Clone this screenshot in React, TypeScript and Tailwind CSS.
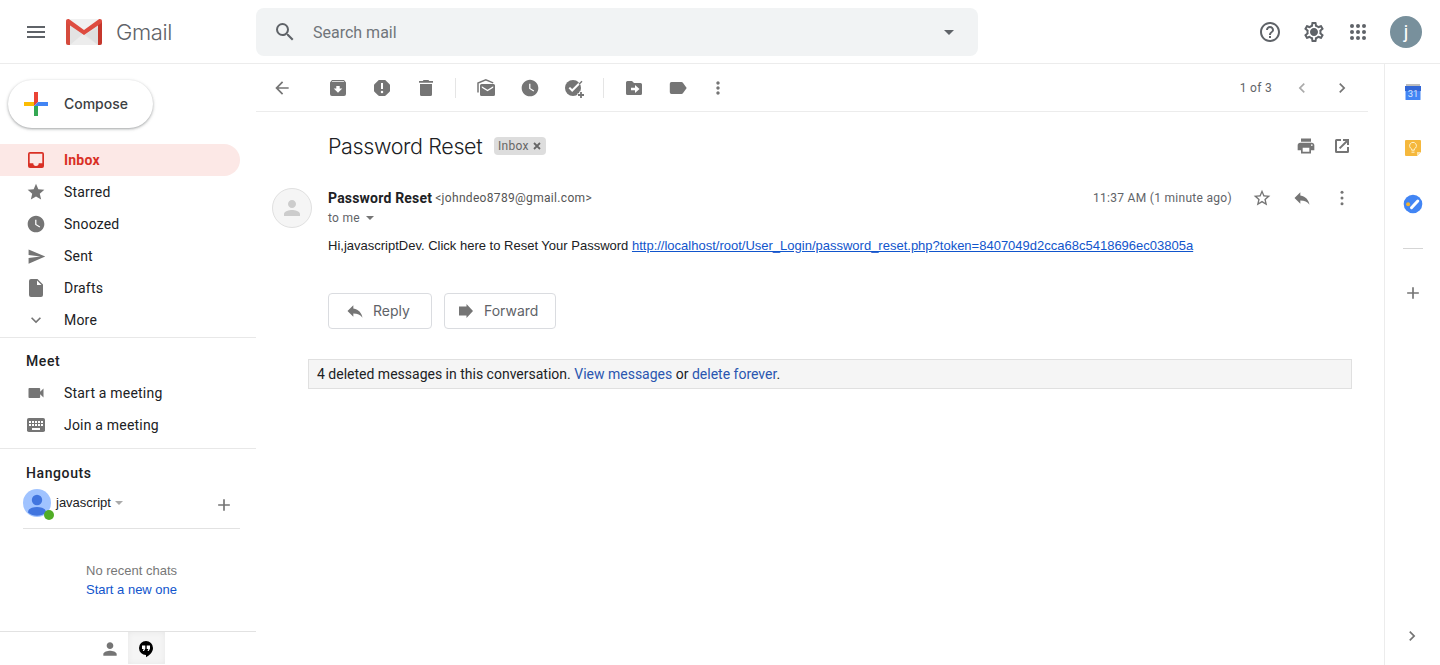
import type { ReactNode } from 'react';
import {
  MdAdd, MdArrowBack, MdArrowDropDown, MdChevronLeft, MdChevronRight, MdExpandMore, MdHelpOutline,
  MdMenu, MdMoreVert, MdOutlineSettings, MdPerson,
  MdPrint, MdReply, MdSearch, MdSend, MdStar, MdStarOutline, MdVideocam, MdWatchLater,
} from 'react-icons/md';

const Svg = ({ children, size = 20, box = 20 }: { children: ReactNode; size?: number; box?: number }) => (
  <svg width={size} height={size} viewBox={`0 0 ${box} ${box}`} fill="currentColor" className="shrink-0">{children}</svg>
);

const Archive = () => (
  <Svg><path fillRule="evenodd" d="M4 2h12l2 2.500V16a2 2 0 0 1-2 2H4a2 2 0 0 1-2-2V4.500zM4.300 3.300L3.700 4h12.600l-.6-.7zM8.300 8v2.500H5.700L10 14.800l4.300-4.300h-2.600V8z" /></Svg>
);
const Spam = () => (
  <Svg><path fillRule="evenodd" d="M7.300 2h5.400c.4 0 .8.200 1 .4l3.900 3.900c.2.200.4.600.4 1v5.400c0 .4-.2.800-.4 1l-3.900 3.900c-.2.200-.6.400-1 .4H7.300c-.4 0-.8-.2-1-.4l-3.900-3.900c-.2-.2-.4-.6-.4-1V7.300c0-.4.200-.8.400-1l3.900-3.900c.2-.2.600-.4 1-.4zM9 5v6h2V5zM10 12.700a1.250 1.250 0 1 0 0 2.500 1.250 1.250 0 0 0 0-2.500z" /></Svg>
);
const Trash = () => (
  <Svg><path d="M7.500 2h5l.7 1H17v1.800H3V3h3.800zM4 6h12v10.500a1.500 1.500 0 0 1-1.500 1.500h-9A1.500 1.500 0 0 1 4 16.500z" /></Svg>
);
const Unread = () => (
  <Svg>
    <path d="M2 14.500V5L9.800 1.900l7.400 3" fill="none" stroke="currentColor" strokeWidth="1.500" />
    <path fillRule="evenodd" d="M5.500 6h12A1.500 1.500 0 0 1 19 7.500v9a1.500 1.500 0 0 1-1.500 1.500h-12A1.500 1.500 0 0 1 4 16.500v-9A1.500 1.500 0 0 1 5.500 6zm.3 2.300v1.500l5.700 3.400 5.700-3.400V8.300l-5.700 3.400z" />
  </Svg>
);
const AddTask = () => (
  <Svg>
    <circle cx="9" cy="10" r="8" />
    <path d="M5.300 9.600l2.900 2.900 9.500-9.500" fill="none" stroke="#fff" strokeWidth="2" />
    <path d="M15 6.300l3-3" fill="none" stroke="currentColor" strokeWidth="1.500" />
    <path d="M13.500 17h7M17 13.500V20" fill="none" stroke="#fff" strokeWidth="3.400" />
    <path d="M14 17h6M17 14v6" fill="none" stroke="currentColor" strokeWidth="1.800" />
  </Svg>
);
const MoveTo = () => (
  <Svg><path fillRule="evenodd" d="M3.500 3H8l2 2h6.500A1.500 1.500 0 0 1 18 6.500v9a1.500 1.500 0 0 1-1.500 1.500h-13A1.500 1.500 0 0 1 2 15.500v-11A1.500 1.500 0 0 1 3.500 3zM11 7v2.700H7v2.600h4V15l4.500-4z" /></Svg>
);
const Label = () => (
  <Svg><path d="M3.500 4h10c.6 0 1.100.2 1.400.7L18.700 10l-3.800 5.300c-.3.5-.8.700-1.400.7h-10A1.700 1.700 0 0 1 1.800 14.300V5.700A1.700 1.700 0 0 1 3.500 4z" /></Svg>
);
const InboxTray = () => (
  <Svg><path fillRule="evenodd" d="M4 2h12a2 2 0 0 1 2 2v12a2 2 0 0 1-2 2H4a2 2 0 0 1-2-2V4a2 2 0 0 1 2-2zm-.3 1.700v9.500h3.600a2.700 2.700 0 0 0 5.400 0h3.600V3.700z" /></Svg>
);
const Draft = () => (
  <Svg><path fillRule="evenodd" d="M5 1h6.500L17 6.500V17a2 2 0 0 1-2 2H5a2 2 0 0 1-2-2V3a2 2 0 0 1 2-2zm6 1.500V7h4.500z" /></Svg>
);
const PopOut = () => (
  <Svg><path fillRule="evenodd" d="M4.500 3H9v2H5v10h10v-4h2v4.500a1.500 1.500 0 0 1-1.500 1.500h-11A1.500 1.500 0 0 1 3 15.500v-11A1.500 1.500 0 0 1 4.500 3zM11 3h6v6h-2V6.400l-6.700 6.700-1.400-1.400L13.600 5H11z" /></Svg>
);
const Dots = () => (
  <Svg><circle cx="10" cy="4.300" r="1.500" /><circle cx="10" cy="10" r="1.500" /><circle cx="10" cy="15.700" r="1.500" /></Svg>
);
const Keyboard = () => (
  <Svg>
    <rect x="1" y="3" width="18" height="14" rx="1.800" />
    <path d="M3 7h14M3 10h14" stroke="#fff" strokeWidth="2" strokeDasharray="2 1" />
    <path d="M6 14h8" stroke="#fff" strokeWidth="2" />
  </Svg>
);
const GmailLogo = () => (
  <svg width="36" height="26" viewBox="0 0 36 26">
    <rect width="36" height="26" rx="2" fill="#e3e3e3" />
    <path d="M2 0h32L18 12z" fill="#f1f1f1" />
    <path d="M4 26L18 14l14 12z" fill="#ededed" />
    <path d="M4 10l14 6 14 10V9L18 16z" fill="#d6d6d6" opacity=".4" />
    <path d="M0 2l4 3v21H2a2 2 0 0 1-2-2z" fill="#d54b3d" />
    <path d="M36 2l-4 3v21h2a2 2 0 0 0 2-2z" fill="#c5372c" />
    <path d="M0 2.300C0 .4 2 -.6 3.500.500L18 11 32.500.500C34 -.6 36 .4 36 2.300c0 1-.4 1.700-1.200 2.300L18 16 1.200 4.600C.4 4 0 3.300 0 2.300z" fill="#de4c40" />
  </svg>
);
const Hangouts = () => (
  <svg width="16" height="18" viewBox="0 0 16 18">
    <path d="M8 1a7 7 0 0 0 0 14v2.200c3-1.500 7-4.700 7-9.200a7 7 0 0 0-7-7z" fill="#000" />
    <path d="M4 5.500h3.300v3.300L6 11H4.800l.9-2H4zM8.700 5.500H12v3.300L10.700 11H9.500l.9-2H8.700z" fill="#fff" />
  </svg>
);

const Cell = ({ children, className = 'w-11' }: { children: ReactNode; className?: string }) => (
  <span className={`flex h-full shrink-0 items-center justify-center ${className}`}>{children}</span>
);

const NavRow = ({ icon, label, active = false }: { icon: ReactNode; label: string; active?: boolean }) => (
  <a className={active
    ? 'mr-4 flex h-8 items-center rounded-r-full bg-[#fce8e6] pl-6 text-[#d93025]'
    : 'mr-4 flex h-8 items-center pl-6 text-[#757575]'}>
    <span className="flex w-6 justify-center">{icon}</span>
    <span className={active ? 'ml-4 font-bold tracking-[0.2px]' : 'ml-4 tracking-[0.2px] text-[#202124]'}>{label}</span>
  </a>
);

const Header = () => (
  <header className="flex h-16 shrink-0 items-center border-b border-[#ececec] text-[#5f6368]">
    <div className="flex w-64 items-center pl-6">
      <MdMenu size={24} />
      <span className="ml-[18px]"><GmailLogo /></span>
      <span className="ml-3.5 font-['Inter'] text-[22px] font-light leading-7 tracking-[-0.4px]">Gmail</span>
    </div>
    <div className="flex h-12 w-[722px] items-center rounded-lg bg-[#f1f3f4] pr-[17px]">
      <span className="ml-[17px]"><MdSearch size={24} /></span>
      <span className="ml-4 mt-0.5 flex-1 text-[16px] text-[#70757a]">Search mail</span>
      <MdArrowDropDown size={24} />
    </div>
    <div className="ml-auto flex h-full items-center pr-[18px]">
      <Cell><MdHelpOutline size={24} /></Cell>
      <Cell>
        <span className="grid place-items-center *:[grid-area:1/1]">
          <MdOutlineSettings size={24} />
          <span className="size-1.5 rounded-full bg-[#5f6368]" />
        </span>
      </Cell>
      <Cell>
        <Svg size={16} box={16}>
          {[2, 8, 14].map((y) => [2, 8, 14].map((x) => <circle key={`${x}-${y}`} cx={x} cy={y} r="2" />))}
        </Svg>
      </Cell>
      <span className="ml-2.5 flex size-8 items-center justify-center rounded-full bg-[#78909c] text-[19px] leading-none text-white">j</span>
    </div>
  </header>
);

const Sidebar = () => (
  <aside className="flex w-64 shrink-0 flex-col text-[14px]">
    <button className="mt-4 ml-2 flex h-12 w-[145px] shrink-0 items-center rounded-full bg-white pl-4 shadow-[0_1px_2px_0_rgba(60,64,67,0.302),0_1px_3px_1px_rgba(60,64,67,0.149)]">
      <svg width="24" height="24" viewBox="0 0 24 24">
        <path d="M10 0h4v10l-4 4z" fill="#ea4335" />
        <path d="M14 10h10v4H10z" fill="#4285f4" />
        <path d="M10 14h4v10h-4z" fill="#34a853" />
        <path d="M0 10h10v4H0z" fill="#fbbc04" />
      </svg>
      <span className="mb-px ml-4 font-['Inter'] text-[14px] font-medium tracking-[-0.02px] text-[#3c4043]">Compose</span>
    </button>
    <nav className="mt-4 border-b border-[#e8e8e8] pb-[1px]">
      <NavRow active icon={<InboxTray />} label="Inbox" />
      <NavRow icon={<MdStar size={20} />} label="Starred" />
      <NavRow icon={<MdWatchLater size={20} />} label="Snoozed" />
      <NavRow icon={<MdSend size={19} />} label="Sent" />
      <NavRow icon={<Draft />} label="Drafts" />
      <NavRow icon={<MdExpandMore size={20} />} label="More" />
    </nav>
    <section className="border-b border-[#e8e8e8] pt-[7px] pb-[7px]">
      <h2 className="h-8 pl-[26px] font-medium leading-8 tracking-[0.6px] text-[#202124]">Meet</h2>
      <NavRow icon={<MdVideocam size={20} />} label="Start a meeting" />
      <NavRow icon={<Keyboard />} label="Join a meeting" />
    </section>
    <section className="pt-4">
      <h2 className="h-4 pl-[26px] font-medium leading-4 tracking-[0.6px] text-[#202124]">Hangouts</h2>
      <div className="mr-4 ml-[23px] mt-2 flex h-10 items-start border-b border-[#e2e2e2] font-['Liberation_Sans'] text-[13px] text-[#202124]">
        <span className="relative">
          <svg width="28" height="28" viewBox="0 0 28 28">
            <circle cx="14" cy="14" r="14" fill="#a0c3ff" />
            <circle cx="14" cy="11" r="5.200" fill="#4175df" />
            <path d="M5 23.500c0-4 4-5.500 9-5.500s9 1.500 9 5.500a14 14 0 0 1-18 0z" fill="#4175df" />
          </svg>
          <span className="absolute -right-[3px] -bottom-[3px] size-2.5 rounded-full bg-[#51ad26]" />
        </span>
        <span className="ml-[5px] leading-7">javascript</span>
        <span className="ml-1 mt-3 h-0 w-0 border-x-4 border-t-4 border-x-transparent border-t-[#aaa]" />
        <span className="mt-1.5 mr-1.5 ml-auto text-[#757575]"><MdAdd size={20} /></span>
      </div>
    </section>
    <div className="pt-8 pl-[86px] font-['Liberation_Sans'] text-[13px] leading-[19px]">
      <p className="text-[#777]">No recent chats</p>
      <a className="text-[#15c]">Start a new one</a>
    </div>
    <footer className="mt-auto flex h-[34px] shrink-0 border-t border-[#e2e2e2] pl-[91px] text-[#757575]">
      <Cell className="w-[37px]"><MdPerson size={20} /></Cell>
      <span className="flex h-8 w-[37px] items-center justify-center bg-[#f5f5f5] pt-0.5 pr-px shadow-[inset_0_0_6px_rgba(0,0,0,0.06)]"><Hangouts /></span>
    </footer>
  </aside>
);

const Toolbar = () => (
  <div className="mr-4 flex h-12 shrink-0 items-center border-b border-[#ececec] text-[#757575]">
    <Cell className="mr-2 w-[52px]"><MdArrowBack size={20} /></Cell>
    <Cell><Archive /></Cell>
    <Cell><Spam /></Cell>
    <Cell><Trash /></Cell>
    <span className="mx-[7px] h-5 w-px bg-[#e5e5e5]" />
    <Cell className="ml-px w-11"><Unread /></Cell>
    <Cell><MdWatchLater size={20} /></Cell>
    <Cell><AddTask /></Cell>
    <span className="mx-[7px] h-5 w-px bg-[#e5e5e5]" />
    <Cell className="ml-px w-11"><MoveTo /></Cell>
    <Cell><Label /></Cell>
    <Cell className="w-9"><MdMoreVert size={20} /></Cell>
    <span className="ml-auto text-[12px] tracking-[0.3px] text-[#5f6368]">1 of 3</span>
    <Cell className="ml-2.5 w-10"><span className="text-[#aaa]"><MdChevronLeft size={20} /></span></Cell>
    <Cell className="mr-1.5 w-10"><MdChevronRight size={20} /></Cell>
  </div>
);

const Message = () => (
  <main className="flex min-w-0 flex-1 flex-col">
    <Toolbar />
    <div className="mr-4 flex h-[68px] shrink-0 items-center pl-[72px]">
      <h1 className="mb-px w-[156px] whitespace-nowrap font-['Inter'] text-[21.500px] font-[350] leading-7 tracking-[-0.38px] text-[#202124]">Password Reset</h1>
      <span className="ml-2.5 flex h-[18px] w-[52px] items-center rounded bg-[#ddd] pl-1 text-[12px] tracking-[0.3px] text-[#666]">
        Inbox
        <svg className="ml-1" width="8" height="8" viewBox="0 0 8 8"><path d="M1 1l6 6M7 1L1 7" stroke="#666" strokeWidth="1.800" /></svg>
      </span>
      <div className="ml-auto flex h-full pr-2 text-[#757575]">
        <Cell className="w-9"><MdPrint size={20} /></Cell>
        <Cell className="w-9"><PopOut /></Cell>
      </div>
    </div>
    <div className="mr-4 flex pl-4">
      <span className="mt-2 flex size-10 shrink-0 items-center justify-center rounded-full border border-[#e0e0e0] bg-[#f5f5f5] text-[#ccc]"><MdPerson size={24} /></span>
      <div className="ml-4 min-w-0 flex-1">
        <div className="flex h-9 items-center">
          <span className="text-[14px] font-bold tracking-[0.2px] text-[#202124]">Password Reset</span>
          <span className="ml-[3px] text-[12px] tracking-[0.32px] text-[#555]">&lt;johndeo8789@gmail.com&gt;</span>
          <span className="mr-2 ml-auto text-[12px] tracking-[0.3px] text-[#5f6368]">11:37 AM (1 minute ago)</span>
          <div className="flex h-full pr-1 text-[#757575]">
            <Cell className="w-11"><MdStarOutline size={20} /></Cell>
            <Cell className="w-9"><MdReply size={20} /></Cell>
            <Cell className="w-11"><Dots /></Cell>
          </div>
        </div>
        <div className="-mt-1.5 flex h-4 items-center text-[12px] leading-4 tracking-[0.3px] text-[#5f6368]">
          to me <span className="ml-1.5 h-0 w-0 border-x-4 border-t-4 border-x-transparent border-t-[#757575]" />
        </div>
        <p className="mt-2.5 whitespace-nowrap font-['Liberation_Sans'] text-[13px] leading-5 text-[#202124]">
          Hi,javascriptDev. Click here to Reset Your Password <a className="text-[#15c] underline">http://localhost/root/User_Login/password_reset.php?token=8407049d2cca68c5418696ec03805a</a>
        </p>
        <div className="mt-[37px] flex gap-3 font-['Inter'] text-[14px] text-[#5f6368]">
          <button className="flex h-9 w-[104px] items-center rounded border border-[#dadce0] pl-4">
            <span className="text-[#757575]"><MdReply size={20} /></span>
            <span className="mb-px ml-2">Reply</span>
          </button>
          <button className="flex h-9 w-28 items-center rounded border border-[#dadce0] pl-[11px]">
            <span className="text-[#757575]"><Svg><path d="M3 5.500h7.500V3l6.500 7-6.500 7v-2.500H3z" /></Svg></span>
            <span className="mb-px ml-2">Forward</span>
          </button>
        </div>
      </div>
    </div>
    <div className="mt-[30px] mr-8 ml-[52px] flex h-[30px] items-center border border-[#e0e0e0] bg-[#f5f5f5] pl-2 text-[14px] text-[#202124]">
      <p>4 deleted messages in this conversation. <a className="text-[#2a56b0]">View messages</a> or <a className="text-[#2a56b0]">delete forever</a>.</p>
    </div>
  </main>
);

const AppsPanel = () => (
  <aside className="flex w-14 shrink-0 flex-col items-center border-l border-[#ececec] pt-[19px] text-[#757575]">
    <svg width="16" height="18" viewBox="0 0 16 18">
      <path d="M1 1h14v4H1z" fill="#bdbdbd" />
      <path d="M.5 7h15v9.500a.5.5 0 0 1-.5.5H1a.5.5 0 0 1-.5-.5z" fill="#4285f4" />
      <path d="M0 3h16v5H0z" fill="#3367d6" />
      <text x="8" y="13.500" fill="#d9e5fc" fontSize="9.500" textAnchor="middle" fontFamily="Roboto">31</text>
    </svg>
    <svg className="mt-[39px]" width="16" height="16" viewBox="0 0 16 16">
      <path d="M1 0h14a1 1 0 0 1 1 1v11l-4 4H1a1 1 0 0 1-1-1V1a1 1 0 0 1 1-1z" fill="#f5b83d" />
      <path d="M16 12l-4 4v-4z" fill="#fce3a9" />
      <path d="M6.700 10.200V8.900a3.400 3.400 0 1 1 2.600 0v1.300zM6.500 12.200h3" fill="none" stroke="#fff3d0" />
    </svg>
    <svg className="mt-[38px]" width="20" height="20" viewBox="0 0 20 20">
      <circle cx="10" cy="10" r="9.300" fill="#4285f4" />
      <circle cx="5.100" cy="10.200" r="2" fill="#f5b32d" />
      <path d="M8.500 13.700l6.300-6.700" stroke="#fff" strokeWidth="3" strokeLinecap="round" />
    </svg>
    <span className="mt-[34px] h-px w-5 bg-[#d5d5d5]" />
    <span className="mt-[34px]"><MdAdd size={20} /></span>
    <span className="mt-auto mr-0.5 mb-[19px]"><MdChevronRight size={20} /></span>
  </aside>
);

export default function App() {
  return (
    <div className="flex h-[665px] w-[1440px] flex-col overflow-hidden bg-white font-['Roboto',sans-serif]">
      <Header />
      <div className="flex min-h-0 flex-1">
        <Sidebar />
        <Message />
        <AppsPanel />
      </div>
    </div>
  );
}
